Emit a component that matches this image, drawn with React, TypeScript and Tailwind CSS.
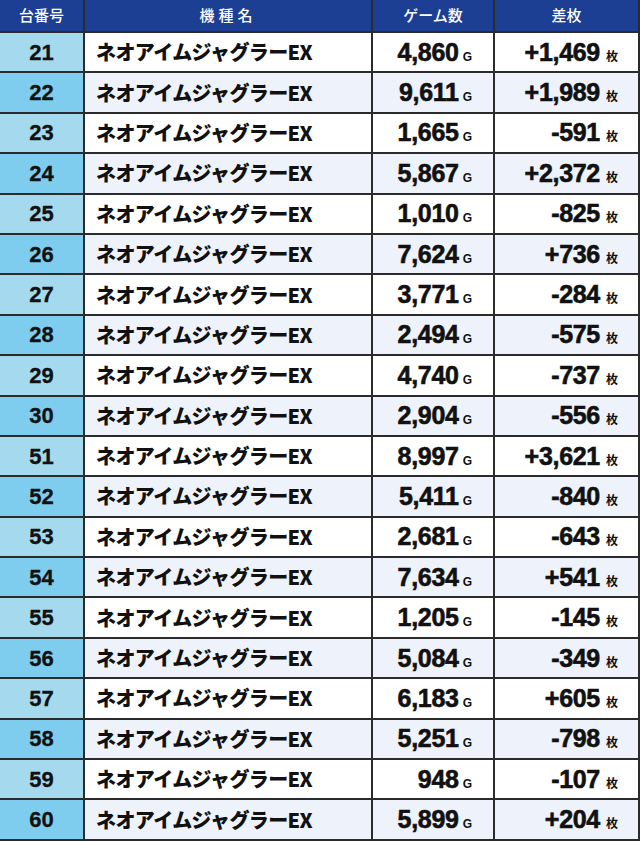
const rows: [number, string, string][] = [
  [21, "4,860", "+1,469"],
  [22, "9,611", "+1,989"],
  [23, "1,665", "-591"],
  [24, "5,867", "+2,372"],
  [25, "1,010", "-825"],
  [26, "7,624", "+736"],
  [27, "3,771", "-284"],
  [28, "2,494", "-575"],
  [29, "4,740", "-737"],
  [30, "2,904", "-556"],
  [51, "8,997", "+3,621"],
  [52, "5,411", "-840"],
  [53, "2,681", "-643"],
  [54, "7,634", "+541"],
  [55, "1,205", "-145"],
  [56, "5,084", "-349"],
  [57, "6,183", "+605"],
  [58, "5,251", "-798"],
  [59, "948", "-107"],
  [60, "5,899", "+204"],
];

const latin = "font-['Liberation_Sans',Arial,sans-serif]";
const jp = "font-['Noto_Sans_CJK_JP','Noto_Sans',sans-serif]";

export default function App() {
  return (
    <div className="w-[640px] h-[841px] bg-white">
      <div className="grid grid-cols-[83px_286px_120px_143px] gap-[2px] bg-[#2b2b2b] pr-[2px] pb-[2px] grid-rows-[31px_repeat(20,38.4px)]">
        {/* header */}
        <div className={`${jp} bg-[#1c3f94] flex items-center justify-center text-white text-[15px] font-medium`}>
          台番号
        </div>
        <div className={`${jp} bg-[#1c3f94] flex items-center justify-center text-white text-[15px] font-medium tracking-[4px]`}>
          機種名
        </div>
        <div className={`${jp} bg-[#1c3f94] flex items-center justify-center text-white text-[15px] font-medium`}>
          ゲーム数
        </div>
        <div className={`${jp} bg-[#1c3f94] flex items-center justify-center text-white text-[15px] font-medium`}>
          差枚
        </div>

        {rows.map(([no, games, diff], i) => {
          const even = i % 2 === 1;
          const rowBg = even ? "bg-[#eef2fa]" : "bg-white";
          return [
            <div
              key={`n${no}`}
              className={`${latin} ${even ? "bg-[#7ecdee]" : "bg-[#a4d9ee]"} flex items-center justify-center text-[22px] font-bold text-[#111] [-webkit-text-stroke:0.3px_#111]`}
            >
              {no}
            </div>,
            <div
              key={`m${no}`}
              className={`${jp} ${rowBg} flex items-center pl-[11px] text-[20px] font-black tracking-[-0.6px] text-[#111]`}
            >
              ネオアイムジャグラーEX
            </div>,
            <div
              key={`g${no}`}
              className={`${rowBg} flex items-center justify-end pr-[21px] text-[#111]`}
            >
              <span className="flex items-baseline">
                <span className={`${latin} text-[25px] font-bold leading-none tracking-[-0.3px] [-webkit-text-stroke:0.6px_#111]`}>{games}</span>
                <span className={`${latin} text-[12px] font-bold ml-[4px] leading-none`}>G</span>
              </span>
            </div>,
            <div
              key={`d${no}`}
              className={`${rowBg} flex items-center justify-end pr-[20px] text-[#111]`}
            >
              <span className="flex items-baseline">
                <span className={`${latin} text-[25px] font-bold leading-none tracking-[-0.3px] [-webkit-text-stroke:0.6px_#111]`}>{diff}</span>
                <span className={`${jp} text-[12px] font-bold ml-[6px] leading-none`}>枚</span>
              </span>
            </div>,
          ];
        })}
      </div>
    </div>
  );
}
